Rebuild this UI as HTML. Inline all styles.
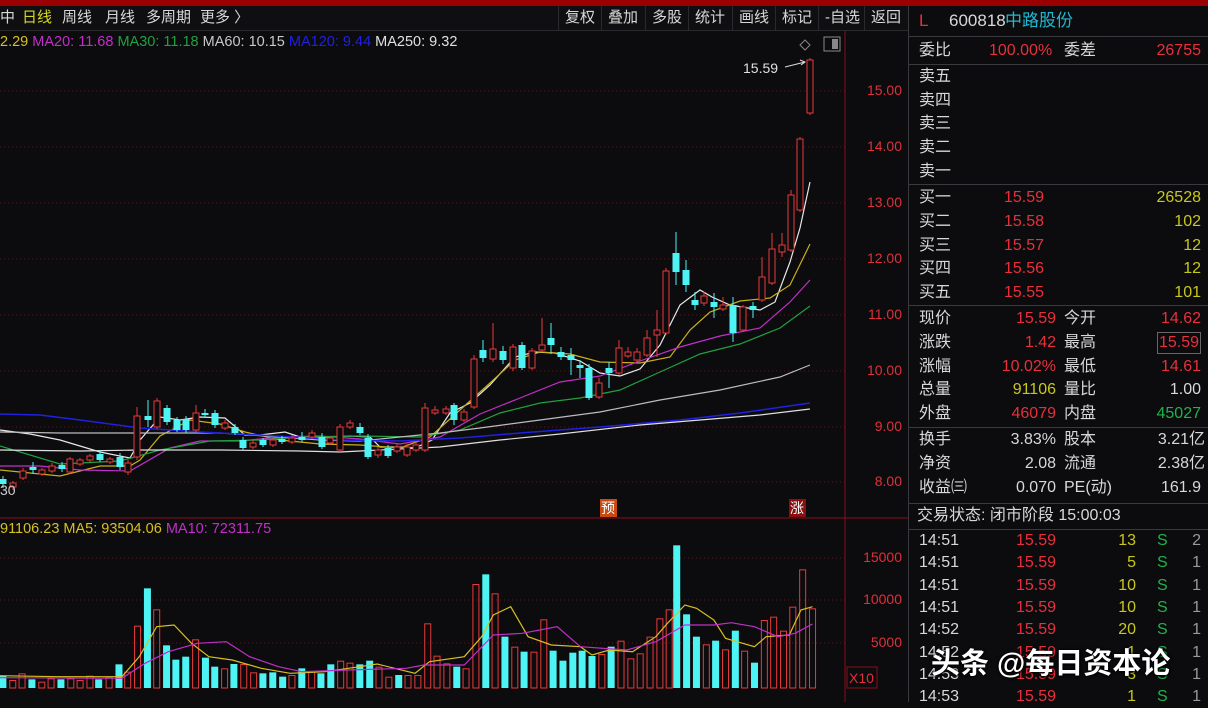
<!DOCTYPE html>
<html><head><meta charset="utf-8">
<style>
*{margin:0;padding:0;box-sizing:border-box}
body{width:1208px;height:702px;background:#0c0b0e;overflow:hidden;position:relative;font-family:"Liberation Sans","Noto Sans CJK SC",sans-serif;color:#d8d8d8}
.abs{position:absolute;white-space:nowrap}
#topbar{position:absolute;left:0;top:0;width:1208px;height:6px;background:#9a0000}
#tool{position:absolute;left:0;top:6px;width:908px;height:25px;background:#0f0f11;border-bottom:1px solid #2a2a2e;font-size:15px;line-height:24px}
.btn{position:absolute;top:0;height:25px;border-left:1px solid #2a2a2e;padding:0 6px;color:#d8d8d8}
.ax{position:absolute;right:306px;font-size:14px;color:#e0303a;text-align:right}
#panel{position:absolute;left:908px;top:6px;width:300px;height:696px;background:#0c0b0e;border-left:1px solid #3a3a3e;font-size:16px}
.row{position:absolute;left:10px;width:282px;height:24px;line-height:24px}
.row span{position:absolute}
.hl{position:absolute;left:0;width:300px;height:1px;background:#3a3a3e}
.r{color:#e8303c}.y{color:#c8c81c}.g{color:#1fb34a}.w{color:#d8d8d8}
</style></head><body>
<div id="topbar"></div>
<div id="tool">
<span class="abs" style="left:0">中</span>
<span class="abs" style="left:22px;color:#d8d820">日线</span>
<span class="abs" style="left:62px">周线</span>
<span class="abs" style="left:105px">月线</span>
<span class="abs" style="left:146px">多周期</span>
<span class="abs" style="left:200px">更多 〉</span>
<div class="btn" style="left:558px">复权</div>
<div class="btn" style="left:601px">叠加</div>
<div class="btn" style="left:645px">多股</div>
<div class="btn" style="left:688px">统计</div>
<div class="btn" style="left:732px">画线</div>
<div class="btn" style="left:775px">标记</div>
<div class="btn" style="left:818px">-自选</div>
<div class="btn" style="left:864px">返回</div>
</div>
<div class="abs" style="left:0;top:33px;font-size:14.5px;line-height:18px">
<span style="color:#d8c020">2.29</span> <span style="color:#c030c8">MA20: 11.68</span> <span style="color:#20a040">MA30: 11.18</span> <span style="color:#c8c8c8">MA60: 10.15</span> <span style="color:#2020e0">MA120: 9.44</span> <span style="color:#e0e0e0">MA250: 9.32</span></div>
<div class="abs" style="left:0;top:520px;font-size:14.5px;line-height:18px">
<span style="color:#d8c020">91106.23 MA5: 93504.06</span> <span style="color:#c030c8">MA10: 72311.75</span></div>
<svg class="abs" style="left:0;top:0" width="908" height="702" id="chart">
<line x1="845" y1="31" x2="845" y2="702" stroke="#8a0f18" stroke-width="1"/>
<line x1="0" y1="518" x2="908" y2="518" stroke="#8a0f18"/>
<g stroke="#5a1a1e" stroke-dasharray="1 3">
<line x1="0" y1="91" x2="845" y2="91"/><line x1="0" y1="147" x2="845" y2="147"/><line x1="0" y1="203" x2="845" y2="203"/><line x1="0" y1="259" x2="845" y2="259"/><line x1="0" y1="315" x2="845" y2="315"/><line x1="0" y1="371" x2="845" y2="371"/><line x1="0" y1="427" x2="845" y2="427"/><line x1="0" y1="482" x2="845" y2="482"/>
<line x1="0" y1="558" x2="845" y2="558"/><line x1="0" y1="600" x2="845" y2="600"/><line x1="0" y1="643" x2="845" y2="643"/>
</g>
<path d="M805 40l5 5-5 5-5-5z" fill="none" stroke="#888"/>
<rect x="824" y="37" width="16" height="14" fill="none" stroke="#888"/><rect x="832" y="39" width="6" height="10" fill="#888"/>
<text x="743" y="73" fill="#e0e0e0" font-size="14" font-family="Liberation Sans">15.59</text>
<path d="M785 67l20-5m-5-2l5 2-4 3" stroke="#ddd" fill="none"/>
<rect x="600" y="499" width="17" height="18" fill="#c84a10"/><text x="601" y="513" fill="#fff" font-size="14" font-family="Noto Sans CJK SC">预</text>
<rect x="789" y="499" width="17" height="18" fill="#8a1010"/><text x="790" y="513" fill="#fff" font-size="14" font-family="Noto Sans CJK SC">涨</text>
<rect x="847" y="667" width="30" height="21" fill="none" stroke="#8a0f18"/>
<text x="849" y="683" fill="#e0303a" font-size="14" font-family="Liberation Sans">X10</text>
<g id="g"></g>
</svg>
<div class="ax" style="top:82px">15.00</div>
<div class="ax" style="top:138px">14.00</div>
<div class="ax" style="top:194px">13.00</div>
<div class="ax" style="top:250px">12.00</div>
<div class="ax" style="top:306px">11.00</div>
<div class="ax" style="top:362px">10.00</div>
<div class="ax" style="top:418px">9.00</div>
<div class="ax" style="top:473px">8.00</div>
<div class="ax" style="top:549px">15000</div>
<div class="ax" style="top:591px">10000</div>
<div class="ax" style="top:634px">5000</div>
<div class="abs" style="left:0;top:482px;font-size:14px;color:#ccc">30</div>

<div id="panel">
<div class="row" style="top:3px;font-size:17px"><span class="r" style="left:0">L</span><span style="left:30px">600818</span><span style="left:86px;color:#20b8d0">中路股份</span></div>
<div class="hl" style="top:30px"></div>
<div class="row" style="top:33px"><span style="left:0">委比</span><span class="r" style="left:70px">100.00%</span><span style="left:145px">委差</span><span class="r" style="right:0">26755</span></div>
<div class="hl" style="top:58px"></div>
<div class="row" style="top:59px"><span>卖五</span></div>
<div class="row" style="top:83px"><span>卖四</span></div>
<div class="row" style="top:106px"><span>卖三</span></div>
<div class="row" style="top:130px"><span>卖二</span></div>
<div class="row" style="top:154px"><span>卖一</span></div>
<div class="hl" style="top:178px"></div>
<div class="row" style="top:180px"><span>买一</span><span class="r" style="left:85px">15.59</span><span class="y" style="right:0">26528</span></div>
<div class="row" style="top:204px"><span>买二</span><span class="r" style="left:85px">15.58</span><span class="y" style="right:0">102</span></div>
<div class="row" style="top:228px"><span>买三</span><span class="r" style="left:85px">15.57</span><span class="y" style="right:0">12</span></div>
<div class="row" style="top:251px"><span>买四</span><span class="r" style="left:85px">15.56</span><span class="y" style="right:0">12</span></div>
<div class="row" style="top:275px"><span>买五</span><span class="r" style="left:85px">15.55</span><span class="y" style="right:0">101</span></div>
<div class="hl" style="top:299px"></div>
<div class="row" style="top:301px"><span>现价</span><span class="r" style="right:145px">15.59</span><span style="left:145px">今开</span><span class="r" style="right:0">14.62</span></div>
<div class="row" style="top:325px"><span>涨跌</span><span class="r" style="right:145px">1.42</span><span style="left:145px">最高</span><span class="r" style="right:0;border:1px solid #666;line-height:20px;top:1px;padding:0 1px">15.59</span></div>
<div class="row" style="top:349px"><span>涨幅</span><span class="r" style="right:145px">10.02%</span><span style="left:145px">最低</span><span class="r" style="right:0">14.61</span></div>
<div class="row" style="top:372px"><span>总量</span><span class="y" style="right:145px">91106</span><span style="left:145px">量比</span><span style="right:0">1.00</span></div>
<div class="row" style="top:396px"><span>外盘</span><span class="r" style="right:145px">46079</span><span style="left:145px">内盘</span><span class="g" style="right:0">45027</span></div>
<div class="hl" style="top:421px"></div>
<div class="row" style="top:422px"><span>换手</span><span style="right:145px">3.83%</span><span style="left:145px">股本</span><span style="right:-4px">3.21亿</span></div>
<div class="row" style="top:446px"><span>净资</span><span style="right:145px">2.08</span><span style="left:145px">流通</span><span style="right:-4px">2.38亿</span></div>
<div class="row" style="top:470px"><span>收益㈢</span><span style="right:145px">0.070</span><span style="left:145px">PE(动)</span><span style="right:0">161.9</span></div>
<div class="hl" style="top:497px"></div>
<div class="row" style="top:498px"><span style="left:-2px">交易状态: 闭市阶段 15:00:03</span></div>
<div class="hl" style="top:523px"></div>
<div id="ticks"></div>
<div class="abs" style="left:22px;top:634px;font-size:29px;font-weight:bold;color:#fff;text-shadow:0 0 3px #000,1px 1px 2px #000">头条 @每日资本论</div>
</div>

<script>
var ns="http://www.w3.org/2000/svg",g=document.getElementById('g');
function el(t,a){var e=document.createElementNS(ns,t);for(var k in a)e.setAttribute(k,a[k]);g.appendChild(e);return e;}
var v=[[5,497,'c'],[22,510,'r'],[38,490,'r'],[55,508,'c'],[72,515,'r'],[88,505,'r'],[105,508,'c'],[122,505,'r'],[138,510,'r'],[155,497,'r'],[170,508,'c'],[188,500,'r'],[205,463,'c'],[220,485,'r'],[237,347,'r'],[254,235,'c'],[270,298,'r'],[287,406,'c'],[303,449,'c'],[320,440,'c'],[337,388,'r'],[354,443,'c'],[370,470,'c'],[387,475,'r'],[403,462,'c'],[420,462,'r'],[437,487,'r'],[453,490,'c'],[470,487,'c'],[487,500,'c'],[503,495,'r'],[520,475,'c'],[537,485,'r'],[553,490,'c'],[570,463,'c'],[587,452,'r'],[603,458,'r'],[620,463,'c'],[637,452,'c'],[653,470,'r'],[670,500,'r'],[687,495,'c'],[703,495,'r'],[720,495,'r'],[737,340,'r'],[753,437,'r'],[770,460,'r'],[787,470,'c'],[803,475,'r'],[820,222,'r'],[837,193,'c'],[853,250,'r'],[870,380,'c'],[887,410,'r'],[903,425,'c'],[920,425,'r'],[937,328,'r'],[953,422,'c'],[970,452,'c'],[987,428,'c'],[1003,422,'c'],[1020,438,'c'],[1037,432,'r'],[1053,410,'c'],[1070,392,'r'],[1087,445,'r'],[1103,430,'r'],[1120,380,'r'],[1137,325,'r'],[1153,298,'r'],[1166,106,'c'],[1183,313,'c'],[1200,380,'c'],[1217,403,'r'],[1233,392,'c'],[1250,418,'r'],[1267,362,'c'],[1283,422,'r'],[1300,458,'c'],[1317,330,'r'],[1333,320,'r'],[1350,362,'r'],[1366,290,'r'],[1383,178,'r'],[1400,295,'r']];
v.forEach(function(b){var x=b[0]/1.723,t=510+b[1]/3;
 if(b[2]=='c')el('rect',{x:x-3.5,y:t,width:7,height:688-t,fill:'#4ef4f4'});
 else el('rect',{x:x-3,y:t+0.5,width:6,height:687.5-t,fill:'none',stroke:'#e83a3a','stroke-width':1});});
function pl(pts,c,w){el('polyline',{points:pts,fill:'none',stroke:c,'stroke-width':w||1.2});}
function vl(arr,c){var s=arr.map(function(p){return (p[0]/1.723).toFixed(1)+','+(510+p[1]/3).toFixed(1);}).join(' ');pl(s,c,1.2);}
vl([[0,497],[100,500],[210,500],[240,440],[270,350],[300,345],[330,400],[360,440],[400,450],[450,475],[500,490],[560,485],[620,470],[650,462],[715,490],[740,455],[800,440],[830,380],[850,315],[880,290],[910,380],[950,405],[1000,410],[1020,435],[1050,420],[1090,425],[1130,380],[1150,340],[1180,285],[1200,295],[1230,330],[1250,385],[1300,410],[1320,380],[1360,375],[1380,300],[1400,290]],'#d8c020');
vl([[0,503],[210,505],[250,460],[290,425],[340,400],[390,395],[430,440],[480,470],[520,485],[600,480],[700,475],[730,465],[800,465],[850,375],[900,370],[960,350],[1000,410],[1080,420],[1130,395],[1180,345],[1230,345],[1260,338],[1300,350],[1340,380],[1370,370],[1400,342]],'#c030c8');
pl("0,430 30,434 60,440 100,452 130,458 140,440 160,417 180,420 200,417 225,418 245,435 260,435 285,432 300,437 330,437 350,436 370,437 380,447 400,447 415,448 432,440 450,413 470,403 490,385 515,357 535,352 555,353 580,361 600,373 620,376 640,369 660,345 680,305 700,290 712,297 730,305 760,310 775,302 790,262 800,228 810,182","#e8e8e8");
pl("0,470 60,476 100,466 130,466 140,460 160,436 190,420 220,424 245,432 280,440 320,444 360,445 400,448 430,437 460,410 490,383 515,360 540,352 570,354 600,362 640,363 670,357 690,330 710,312 740,301 770,298 790,285 810,244","#c8b018");
pl("0,466 40,466 80,470 130,471 170,448 200,441 240,441 280,437 320,436 360,439 400,444 440,437 480,414 520,398 560,382 600,376 640,361 680,347 720,336 760,328 790,302 810,280","#c030c8");
pl("0,446 60,464 120,461 160,450 210,441 260,440 300,437 360,436 420,437 460,430 500,413 540,403 580,398 620,390 660,372 700,354 740,344 780,328 810,306","#20a040");
pl("0,432 60,433 140,433 220,433 280,437 320,440 360,441 400,437 440,433 480,428 540,420 600,412 660,400 720,390 780,377 810,365","#bcbcbc");
pl("0,414 40,415 80,420 140,428 200,432 260,435 340,440 400,441 460,438 520,433 600,427 680,420 740,413 810,403","#2020e0",1.5);
pl("0,450 80,451 140,450 220,450 300,451 340,452 380,450 440,447 500,440 560,434 640,425 700,420 760,415 810,409","#e0e0e0");
var c=[[3,479,484,476,488,'c'],[13,483,487,481,490,'r'],[23,471,478,468,480,'r'],[33,467,470,462,474,'c'],[42,470,474,468,476,'r'],[52,466,471,463,473,'r'],[62,465,469,462,472,'c'],[70,459,472,457,474,'r'],[80,460,464,458,466,'r'],[90,456,460,454,462,'r'],[100,454,460,450,462,'c'],[110,459,462,457,464,'r'],[120,457,467,453,470,'c'],[128,463,472,460,475,'r'],[137,416,457,407,460,'r'],[148,416,420,400,427,'c'],[157,401,427,398,429,'r'],[167,408,422,405,425,'c'],[177,420,430,417,432,'c'],[186,419,430,416,433,'c'],[196,413,430,405,432,'r'],[205,413,415,409,418,'c'],[215,413,425,410,428,'c'],[225,423,428,420,430,'r'],[235,427,433,424,435,'c'],[243,440,448,437,450,'c'],[253,443,447,440,449,'r'],[263,440,445,438,447,'c'],[273,440,445,437,447,'r'],[282,439,442,436,444,'c'],[292,438,442,435,444,'r'],[302,437,440,432,442,'c'],[312,433,437,430,439,'r'],[322,437,447,433,449,'c'],[330,438,443,436,445,'r'],[340,427,450,424,452,'r'],[350,423,427,420,429,'r'],[360,427,433,423,435,'c'],[368,438,457,434,459,'c'],[378,450,455,447,458,'r'],[388,448,456,445,458,'c'],[397,447,451,444,453,'r'],[407,447,455,444,457,'r'],[416,445,450,442,452,'r'],[425,408,450,403,452,'r'],[435,410,413,406,415,'r'],[446,409,413,406,415,'r'],[454,405,420,403,425,'c'],[464,412,420,409,422,'r'],[474,359,407,355,409,'r'],[483,350,358,340,362,'c'],[493,349,359,323,362,'r'],[503,351,360,346,364,'c'],[513,347,368,344,371,'r'],[522,345,368,342,370,'c'],[532,351,368,348,370,'r'],[542,345,350,318,352,'r'],[551,338,345,323,354,'c'],[561,352,357,347,360,'c'],[571,355,360,348,375,'c'],[580,365,368,360,378,'c'],[589,368,398,364,400,'c'],[599,383,397,378,399,'r'],[609,368,373,362,388,'c'],[619,348,373,340,375,'r'],[628,352,356,347,358,'r'],[637,352,360,348,362,'r'],[647,338,355,330,357,'r'],[657,330,335,310,357,'r'],[666,271,333,268,335,'r'],[676,253,272,232,285,'c'],[686,270,285,260,292,'c'],[695,300,305,292,310,'c'],[704,296,303,292,306,'r'],[714,302,307,293,318,'c'],[723,305,309,297,311,'r'],[733,305,333,297,342,'c'],[743,307,330,305,332,'r'],[753,306,310,302,318,'c'],[762,277,300,257,302,'r'],[772,249,283,233,285,'r'],[782,245,252,233,257,'r'],[791,195,250,190,252,'r'],[800,139,210,137,212,'r'],[810,60,113,58,115,'r']];
c.forEach(function(k){var x=k[0],col=k[5]=='c'?'#4ef4f4':'#e83a3a';
 el('line',{x1:x,y1:k[3],x2:x,y2:k[1],stroke:col});el('line',{x1:x,y1:k[2],x2:x,y2:k[4],stroke:col});
 if(k[5]=='c')el('rect',{x:x-3.5,y:k[1],width:7,height:Math.max(2,k[2]-k[1]),fill:col});
 else el('rect',{x:x-3,y:k[1],width:6,height:Math.max(2,k[2]-k[1]),fill:'#0c0b0e',stroke:col});});
var t=document.getElementById('ticks'),tm=['14:51','14:51','14:51','14:51','14:52','14:52','14:53','14:53'],vol=['13','5','10','10','20','1','3','1'],n=['2','1','1','1','1','1','1','1'],h='';
for(var i=0;i<8;i++){var y=524+i*22.3;h+='<div class="row" style="top:'+y+'px;height:22px;line-height:22px"><span>'+tm[i]+'</span><span class="r" style="left:97px">15.59</span><span class="y" style="right:65px">'+vol[i]+'</span><span class="g" style="left:238px">S</span><span style="right:0;color:#999">'+n[i]+'</span></div>';}
t.innerHTML=h;
</script>
</body></html>
